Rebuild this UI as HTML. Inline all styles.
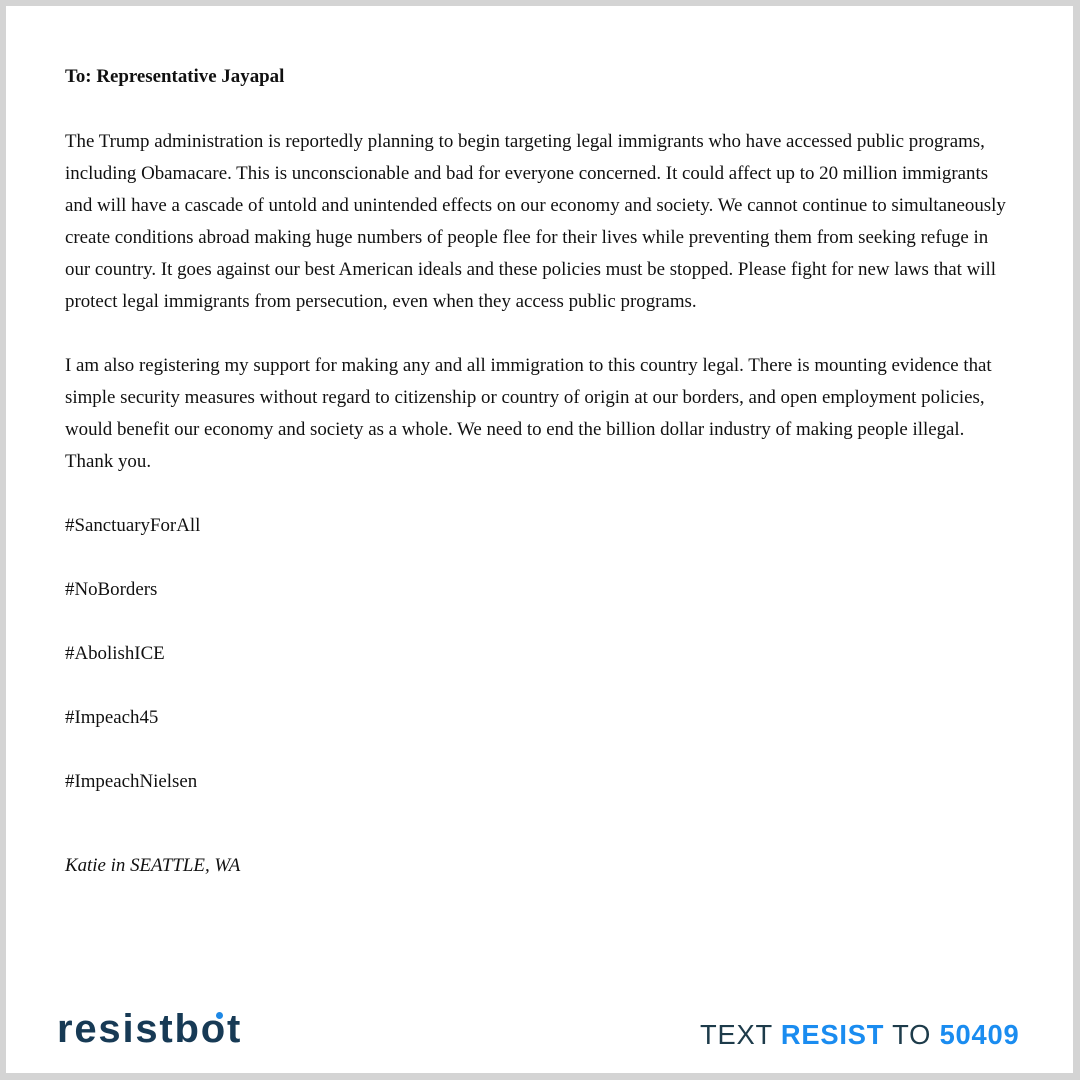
<!DOCTYPE html>
<html><head><meta charset="utf-8"><style>
body{margin:0;width:1080px;height:1080px;background:#d4d4d4;position:relative;overflow:hidden}
.page{position:absolute;left:6px;top:6px;width:1067px;height:1067px;background:#fff}
.l{position:absolute;left:65px;font-family:"Liberation Serif",serif;font-size:18.9px;color:#111;white-space:nowrap;line-height:20px;margin-top:2px}
.logo{position:absolute;left:57px;top:1007px;font-family:"Liberation Sans",sans-serif;font-weight:bold;font-size:40px;color:#173a55;letter-spacing:1.8px;white-space:nowrap}
.o{position:relative}
.dot{position:absolute;left:50%;top:5px;margin-left:2px;width:7px;height:7px;border-radius:50%;background:#1e88e5}
.cta{position:absolute;left:700px;top:1019px;font-family:"Liberation Sans",sans-serif;font-size:27.3px;color:#1d3b4a;letter-spacing:0.8px;white-space:nowrap}
.cta b{color:#1a8cf0}
</style></head><body><div class="page"></div>
<div class="l" style="top:65px;font-weight:bold">To: Representative Jayapal</div>
<div class="l" style="top:130px">The Trump administration is reportedly planning to begin targeting legal immigrants who have accessed public programs,</div>
<div class="l" style="top:162px">including Obamacare. This is unconscionable and bad for everyone concerned. It could affect up to 20 million immigrants</div>
<div class="l" style="top:194px">and will have a cascade of untold and unintended effects on our economy and society. We cannot continue to simultaneously</div>
<div class="l" style="top:226px">create conditions abroad making huge numbers of people flee for their lives while preventing them from seeking refuge in</div>
<div class="l" style="top:258px">our country. It goes against our best American ideals and these policies must be stopped. Please fight for new laws that will</div>
<div class="l" style="top:290px">protect legal immigrants from persecution, even when they access public programs.</div>
<div class="l" style="top:354px">I am also registering my support for making any and all immigration to this country legal. There is mounting evidence that</div>
<div class="l" style="top:386px">simple security measures without regard to citizenship or country of origin at our borders, and open employment policies,</div>
<div class="l" style="top:418px">would benefit our economy and society as a whole. We need to end the billion dollar industry of making people illegal.</div>
<div class="l" style="top:450px">Thank you.</div>
<div class="l" style="top:514px">#SanctuaryForAll</div>
<div class="l" style="top:578px">#NoBorders</div>
<div class="l" style="top:642px">#AbolishICE</div>
<div class="l" style="top:706px">#Impeach45</div>
<div class="l" style="top:770px">#ImpeachNielsen</div>
<div class="l" style="top:854px;font-style:italic">Katie in SEATTLE, WA</div>
<div class="logo">resistb<span class="o">o<span class="dot"></span></span>t</div>
<div class="cta">TEXT <b>RESIST</b> TO <b>50409</b></div>
</body></html>
